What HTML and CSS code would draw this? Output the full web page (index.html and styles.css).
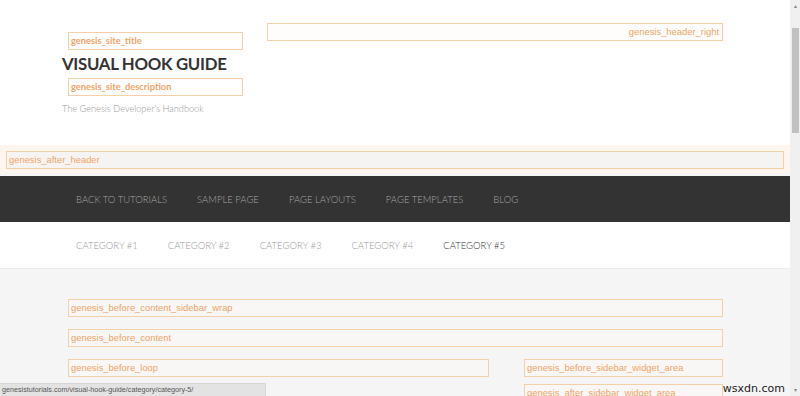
FILE: index.html
```html
<!DOCTYPE html>
<html lang="en">
<head>
    <title>Visual Hook Guide</title>
    <meta charset="UTF-8" />
    <link rel="stylesheet" href="styles.css">
</head>
<body>
<div class="window">
    <div class="page">
        <div class="site-header">
            <div class="title-area">
                <div class="hook hook-bold">genesis_site_title</div>
                <h1 class="site-title">VISUAL HOOK GUIDE</h1>
                <div class="hook hook-bold">genesis_site_description</div>
                <p class="site-description">The Genesis Developer's Handbook</p>
            </div>
            <div class="header-right">
                <div class="hook hook-right">genesis_header_right</div>
            </div>
        </div>

        <div class="after-header">
            <div class="hook hook-wide">genesis_after_header</div>
        </div>

        <nav class="nav-primary">
            <a>Back to Tutorials</a>
            <a>Sample Page</a>
            <a>Page Layouts</a>
            <a>Page Templates</a>
            <a>Blog</a>
        </nav>

        <nav class="nav-secondary">
            <a>Category #1</a>
            <a>Category #2</a>
            <a>Category #3</a>
            <a>Category #4</a>
            <a class="current">Category #5</a>
        </nav>

        <div class="site-inner">
            <div class="hook">genesis_before_content_sidebar_wrap</div>
            <div class="hook">genesis_before_content</div>
            <div class="content-sidebar">
                <div class="content">
                    <div class="hook">genesis_before_loop</div>
                </div>
                <div class="sidebar">
                    <div class="hook">genesis_before_sidebar_widget_area</div>
                    <div class="hook">genesis_after_sidebar_widget_area</div>
                </div>
            </div>
        </div>

        <div class="status-bar">genesistutorials.com/visual-hook-guide/category/category-5/</div>
        <div class="watermark">wsxdn.com</div>
    </div>

    <!-- fake browser scrollbar -->
    <div class="scrollbar">
        <span class="arrow">&#9652;</span>
        <div class="thumb"></div>
        <span class="arrow arrow-down">&#9662;</span>
    </div>
</div>
</body>
</html>
```

FILE: styles.css
```css
body {
    margin: 0;
    padding: 0;
    font-family: 'Lato', sans-serif;
    background-color: #fff;
    color: #333;
    overflow: hidden;
}

.window {
    display: flex;
    width: 800px;
    height: 396px;
    overflow: hidden;
}

.page {
    position: relative;
    width: 790px;
    background-color: #f5f5f5;
}

/* hook labels */
.hook {
    box-sizing: border-box;
    height: 18px;
    margin-left: 6px;
    padding: 0 2px;
    border: 1px solid #f3cfaa;
    background-color: #f8f7f6;
    font-family: 'Liberation Sans', Arial, sans-serif;
    font-size: 9.4px;
    line-height: 16px;
    color: #eda468;
    white-space: nowrap;
    overflow: hidden;
}

.hook-bold {
    width: 175px;
    background-color: #fff;
    font-family: 'Lato', sans-serif;
    font-size: 9.3px;
    font-weight: bold;
}

.hook-right {
    width: 456px;
    margin-left: 0;
    padding-right: 3px;
    background-color: #fffdfb;
    text-align: right;
}

/* header */
.site-header {
    display: flex;
    height: 145px;
    padding-left: 62px;
    background-color: #fff;
}

.title-area {
    width: 181px;
    padding-top: 32px;
}

.site-title {
    margin: 0;
    font-size: 16.8px;
    font-weight: bold;
    letter-spacing: -0.3px;
    line-height: 28px;
    white-space: nowrap;
    color: #333;
}

.site-description {
    margin: 7px 0 0 0;
    font-size: 9.2px;
    font-weight: 300;
    color: #999;
}

.header-right {
    padding: 23px 0 0 24px;
}

.after-header {
    padding: 6px 6px 4px 0;
    background-color: #fdf5ee;
}

.hook-wide {
    background-color: #f5f4f3;
}

/* menus */
.nav-primary,
.nav-secondary {
    display: flex;
    padding-left: 61px;
}

.nav-primary a,
.nav-secondary a {
    padding: 0 15px;
    font-size: 9.5px;
    font-weight: 300;
    text-transform: uppercase;
}

.nav-primary {
    height: 46px;
    margin-top: 3px;
    align-items: center;
    background-color: #333;
}

.nav-primary a {
    color: #a6a6a6;
}

.nav-secondary {
    height: 46px;
    align-items: center;
    background-color: #fff;
    border-bottom: 1px solid #ececec;
}

.nav-secondary a {
    color: #999;
}

.nav-secondary .current {
    color: #333;
}

/* content */
.site-inner {
    display: flex;
    flex-direction: column;
    gap: 12px;
    width: 661px;
    padding: 30px 0 0 62px;
}

.content-sidebar {
    display: flex;
    justify-content: space-between;
}

.content .hook {
    width: 421px;
}

.sidebar {
    display: flex;
    flex-direction: column;
    gap: 7px;
}

.sidebar .hook {
    width: 199px;
}

/* bottom overlays */
.status-bar {
    position: absolute;
    left: 0;
    bottom: 0;
    box-sizing: border-box;
    width: 266px;
    height: 13px;
    padding-left: 2px;
    border-top: 1px solid #d6d6d6;
    border-right: 1px solid #d6d6d6;
    background-color: #e3e3e3;
    font-family: 'Liberation Sans', Arial, sans-serif;
    font-size: 7.2px;
    line-height: 12px;
    color: #555;
}

.watermark {
    position: absolute;
    right: 5px;
    bottom: 0;
    font-family: 'DejaVu Sans', sans-serif;
    font-size: 11px;
    line-height: 14px;
    color: #222;
}

.scrollbar {
    display: flex;
    flex-direction: column;
    align-items: center;
    width: 10px;
    background-color: #f0f0f0;
}

.arrow {
    height: 12px;
    font-size: 6px;
    line-height: 12px;
    color: #888;
}

.thumb {
    width: 7px;
    height: 105px;
    margin-top: 16px;
    background-color: #c1c1c1;
}

.arrow-down {
    margin-top: auto;
}
```
